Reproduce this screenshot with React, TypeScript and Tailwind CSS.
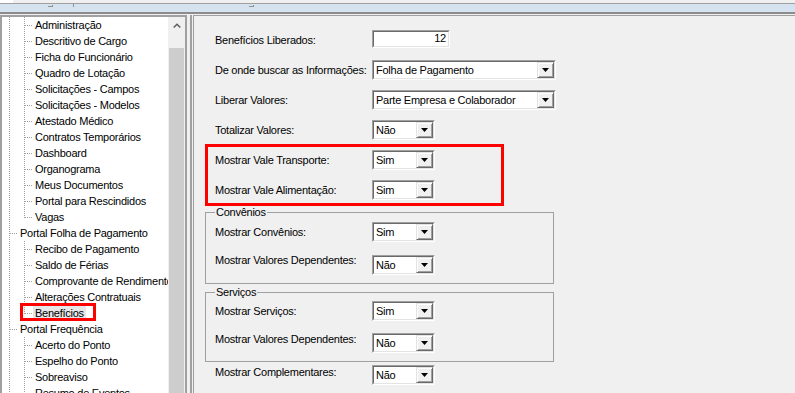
type Line = "full" | "top" | "none"

interface TreeItem {
  label: string
  level: 0 | 1
  c2?: Line
  selected?: boolean
}

const firstGroup = [
  "Administração",
  "Descritivo de Cargo",
  "Ficha do Funcionário",
  "Quadro de Lotação",
  "Solicitações - Campos",
  "Solicitações - Modelos",
  "Atestado Médico",
  "Contratos Temporários",
  "Dashboard",
  "Organograma",
  "Meus Documentos",
  "Portal para Rescindidos",
]

const tree: TreeItem[] = [
  ...firstGroup.map((label) => ({ label, level: 1 as const, c2: "full" as Line })),
  { label: "Vagas", level: 1, c2: "top" },
  { label: "Portal Folha de Pagamento", level: 0 },
  { label: "Recibo de Pagamento", level: 1, c2: "full" },
  { label: "Saldo de Férias", level: 1, c2: "full" },
  { label: "Comprovante de Rendimentos", level: 1, c2: "full" },
  { label: "Alterações Contratuais", level: 1, c2: "full" },
  { label: "Benefícios", level: 1, c2: "top", selected: true },
  { label: "Portal Frequência", level: 0 },
  { label: "Acerto do Ponto", level: 1, c2: "full" },
  { label: "Espelho do Ponto", level: 1, c2: "full" },
  { label: "Sobreaviso", level: 1, c2: "full" },
  { label: "Resumo de Eventos", level: 1, c2: "full" },
]

// dotted tree connector, 15x16 cell
function Cell({ v, h }: { v: Line; h: boolean }) {
  return (
    <svg width="15" height="16" className="shrink-0">
      {v !== "none" && (
        <line x1="7.5" y1="0" x2="7.5" y2={v === "full" ? 16 : 9} stroke="#a0a0a0" strokeDasharray="1 1" />
      )}
      {h && <line x1="8" y1="8.5" x2="15" y2="8.5" stroke="#a0a0a0" strokeDasharray="1 1" />}
    </svg>
  )
}

function TreeRow({ item }: { item: TreeItem }) {
  return (
    <div className="relative flex h-4 items-center whitespace-nowrap">
      <Cell v="full" h={item.level === 0} />
      {item.level === 1 && <Cell v={item.c2 ?? "full"} h />}
      <span className={`ml-px px-[2px] leading-[14px] ${item.selected ? "bg-[#e6e6e6]" : ""}`}>{item.label}</span>
      {item.selected && (
        <div className="pointer-events-none absolute -top-[2px] left-[18px] h-[18px] w-[76px] border-[3px] border-[#ff0000]" />
      )}
    </div>
  )
}

function Arrow() {
  return (
    <svg width="7" height="4" viewBox="0 0 7 4">
      <path d="M0 0h7L3.5 4z" fill="#000" />
    </svg>
  )
}

function Select({ value, w }: { value: string; w: string }) {
  return (
    <div className={`flex h-[20px] ${w} border border-t-[#a0a0a0] border-l-[#a0a0a0] border-b-white border-r-white`}>
      <div className="flex flex-1 border border-t-[#696969] border-l-[#696969] border-b-[#e3e3e3] border-r-[#e3e3e3] bg-white">
        <span className="flex-1 pl-[2px] leading-[16px]">{value}</span>
        <div className="flex w-[17px] items-center justify-center border border-t-[#e3e3e3] border-l-[#e3e3e3] border-b-[#696969] border-r-[#696969] bg-[#f0f0f0] shadow-[inset_1px_1px_#fff,inset_-1px_-1px_#a0a0a0]">
          <Arrow />
        </div>
      </div>
    </div>
  )
}

function Row({ label, children }: { label: string; children: React.ReactNode }) {
  return (
    <div className="flex h-[30px] items-center pl-[10px]">
      <span className="w-[157px]">{label}</span>
      {children}
    </div>
  )
}

function GroupRow({ label, value, className, labelClass = "" }: { label: string; value: string; className: string; labelClass?: string }) {
  return (
    <div className={`flex h-[20px] items-center ${className}`}>
      <span className={`w-[157px] ${labelClass}`}>{label}</span>
      <Select value={value} w="w-[63px]" />
    </div>
  )
}

export default function App() {
  return (
    <div className="flex h-[393px] w-[795px] flex-col overflow-hidden bg-[#f0f0f0] font-['Liberation_Sans',Arial,sans-serif] text-[11px] tracking-[-0.25px] text-black">
      {/* top strip */}
      <div className="flex h-[3px] bg-[#f0f0f0]">
        <span className="h-[3px] w-[13px] bg-white" />
      </div>
      <div className="flex h-[9px] items-start border-t border-[#a0a0a0] bg-[#d5e3f1]">
        <span className="ml-[48px] mt-px h-[2px] w-[5px] border-r border-b border-[#909090]" />
        <span className="ml-[20px] h-[3px] w-px bg-[#909090]" />
        <span className="ml-[175px] mt-px h-[2px] w-[5px] border-r border-b border-[#909090]" />
      </div>
      <div className="h-[2px] bg-[#8c8c8c]" />

      <div className="flex min-h-0 flex-1 pt-px">
        {/* left tree panel */}
        <div className="flex w-[187px] border-t-2 border-l-2 border-r-2 border-[#a0a0a0]">
          <div className="w-[166px] overflow-hidden bg-white">
            {tree.map((item, i) => (
              <TreeRow key={i} item={item} />
            ))}
          </div>
          <div className="flex w-[17px] flex-col bg-[#f0f0f0]">
            <div className="flex h-[17px] items-center justify-center">
              <svg width="8" height="5" viewBox="0 0 8 5">
                <path d="M0.7 4.5L4 1.2l3.3 3.3" stroke="#606060" strokeWidth="1.5" fill="none" />
              </svg>
            </div>
            <div className="h-[14px]" />
            <div className="mx-px flex-1 bg-[#cdcdcd]" />
          </div>
        </div>

        {/* right form panel */}
        <div className="ml-[3px] flex flex-1 border-l-2 border-[#a0a0a0] pl-px">
          <div className="flex-1 border-t border-l border-[#a0a0a0] bg-[#f0f0f0] pl-[11px] pt-[9px]">
            <Row label="Benefícios Liberados:">
              <div className="mb-[3px] flex h-[18px] w-[78px] border border-t-[#a0a0a0] border-l-[#a0a0a0] border-b-white border-r-white">
                <div className="flex flex-1 items-center justify-end border border-t-[#696969] border-l-[#696969] border-b-[#e3e3e3] border-r-[#e3e3e3] bg-white pr-[2px]">
                  12
                </div>
              </div>
            </Row>
            <Row label="De onde buscar as Informações:">
              <Select value="Folha de Pagamento" w="w-[184px]" />
            </Row>
            <Row label="Liberar Valores:">
              <Select value="Parte Empresa e Colaborador" w="w-[184px]" />
            </Row>
            <Row label="Totalizar Valores:">
              <Select value="Não" w="w-[63px]" />
            </Row>
            <div className="relative">
              <Row label="Mostrar Vale Transporte:">
                <Select value="Sim" w="w-[63px]" />
              </Row>
              <Row label="Mostrar Vale Alimentação:">
                <Select value="Sim" w="w-[63px]" />
              </Row>
              <div className="pointer-events-none absolute -top-px left-0 h-[62px] w-[299px] border-[3px] border-[#ff0000]" />
            </div>

            <fieldset className="mt-px w-[349px] border border-[#a0a0a0] px-[9px] pb-[8px]">
              <legend className="px-px leading-[13px]">Convênios</legend>
              <GroupRow label="Mostrar Convênios:" value="Sim" className="mt-[3px]" />
              <GroupRow label="Mostrar Valores Dependentes:" value="Não" className="mt-[13px]" labelClass="mb-[10px]" />
            </fieldset>

            <fieldset className="mt-[2px] w-[349px] border border-[#a0a0a0] px-[9px] pb-[8px]">
              <legend className="px-px leading-[13px]">Serviços</legend>
              <GroupRow label="Mostrar Serviços:" value="Sim" className="mt-[2px]" />
              <GroupRow label="Mostrar Valores Dependentes:" value="Não" className="mt-[12px]" labelClass="mb-[8px]" />
            </fieldset>

            <div className="mt-[3px] flex h-[20px] items-center pl-[10px]">
              <span className="mb-[6px] w-[157px]">Mostrar Complementares:</span>
              <Select value="Não" w="w-[63px]" />
            </div>
          </div>
        </div>
      </div>
    </div>
  )
}
